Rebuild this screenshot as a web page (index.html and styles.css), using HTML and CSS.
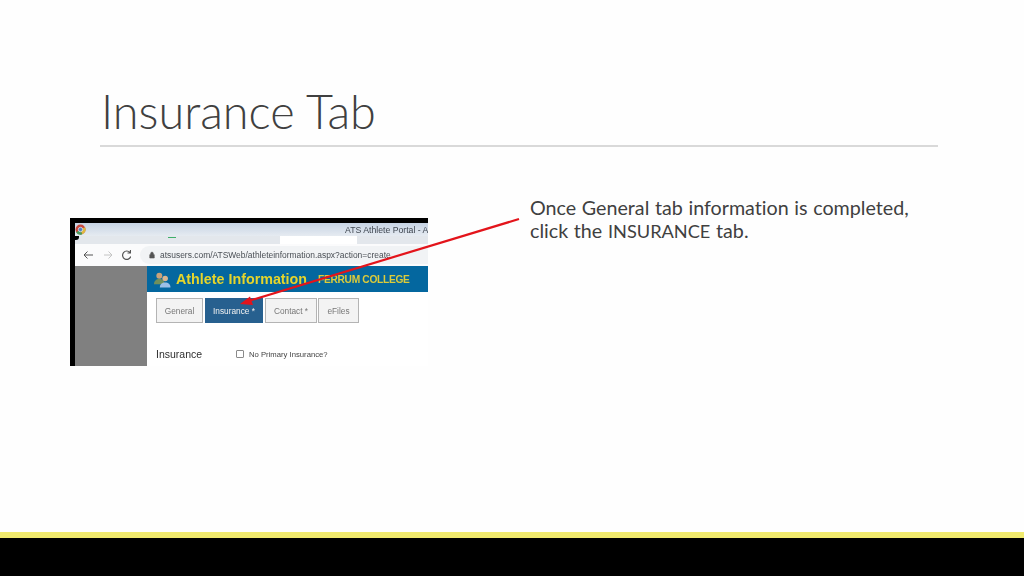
FILE: index.html
```html
<!DOCTYPE html>
<html lang="en">
<head>
<meta charset="utf-8">
<title>Insurance Tab</title>
<link rel="stylesheet" href="styles.css">
</head>
<body>
<div class="slide">
  <header class="head">
    <h1 class="title">Insurance Tab</h1>
  </header>
  <main class="content">
    <figure class="shot">
      <div class="chrome-title">
        <svg class="chrome-logo" viewBox="0 0 12 12" aria-hidden="true">
          <circle cx="6" cy="6" r="5.500" fill="#c9483c"/>
          <path d="M6 6 L1.200 9 A5.500 5.500 0 0 0 8 11.200 Z" fill="#4a9a5a"/>
          <path d="M6 6 L8 11.200 A5.500 5.500 0 0 0 11 3.500 Z" fill="#dfb93f"/>
          <circle cx="6" cy="6" r="2.400" fill="#4f7fc4" stroke="#eee" stroke-width=".8"/>
        </svg>
        <span class="portal">ATS Athlete Portal - A</span>
      </div>
      <div class="chrome-tabs"><span class="tab-mark"></span></div>
      <div class="chrome-bar">
        <svg class="nav" viewBox="0 0 48 12" aria-hidden="true">
          <path d="M10 6H1M4.500 2.500 1 6l3.500 3.500" fill="none" stroke="#555" stroke-width="1"/>
          <path d="M21 6h8M25.500 2.500 29 6l-3.500 3.500" fill="none" stroke="#c4c4c4" stroke-width="1"/>
          <path d="M47 3.500A4.200 4.200 0 1 0 47.800 7.500M47.500 1v3h-3" fill="none" stroke="#555" stroke-width="1.200"/>
        </svg>
        <div class="url">
          <svg class="lock" viewBox="0 0 8 10" aria-hidden="true"><path d="M1 4.500h6V9H1zM2.200 4.500V3a1.800 1.800 0 0 1 3.600 0v1.500" fill="#555" stroke="#555" stroke-width=".8"/></svg>
          <span class="url-text">atsusers.com/ATSWeb/athleteinformation.aspx?action=create</span>
        </div>
      </div>
      <div class="page">
        <div class="side"></div>
        <div class="app">
          <div class="banner">
            <svg class="people" viewBox="0 0 16 16" aria-hidden="true">
              <circle cx="5" cy="4.500" r="2.800" fill="#c9a27a"/>
              <path d="M0 12.500c0-3.200 2-5 5-5s5 1.800 5 5z" fill="#6f8f5c"/>
              <circle cx="10.500" cy="7" r="2.600" fill="#d9b48e"/>
              <path d="M5.500 15.500c0-3 2-4.700 5-4.700s5 1.700 5 4.700z" fill="#9cbfe6"/>
            </svg>
            <span class="app-name">Athlete Information</span>
            <span class="college">FERRUM COLLEGE</span>
          </div>
          <div class="tabs">
            <span class="tab tab-general">General</span>
            <span class="tab tab-active">Insurance *</span>
            <span class="tab tab-contact">Contact *</span>
            <span class="tab tab-efiles">eFiles</span>
          </div>
          <div class="ins-row">
            <span class="ins-label">Insurance</span>
            <span class="check"></span>
            <span class="ins-text">No Primary Insurance?</span>
          </div>
        </div>
      </div>
      <span class="notch"></span>
    </figure>
    <p class="note">Once General tab information is completed, click the <span class="caps">INSURANCE</span> tab.</p>
    <svg class="arrow" viewBox="0 0 1024 576" aria-hidden="true">
      <path d="M519 219 250 300.500" fill="none" stroke="#e3141b" stroke-width="2.200"/>
      <path d="M240 304 250 296.500 253 305z" fill="#e3141b"/>
    </svg>
  </main>
  <footer class="foot"></footer>
</div>
</body>
</html>
```
FILE: styles.css
```css
* { box-sizing: border-box; }
html, body { margin: 0; padding: 0; }
body { width: 1024px; height: 576px; overflow: hidden; background: #fff; font-family: "Liberation Sans", Arial, sans-serif; }

.slide { position: relative; width: 1024px; height: 576px; display: flex; flex-direction: column; background: #fefefe; }

.head { height: 147px; margin: 0 86px 0 100px; border-bottom: 2px solid #d9d9d9; padding: 83px 0 0 1px; }
.title { margin: 0; font-family: Lato, "Open Sans", sans-serif; font-weight: 300; font-size: 46.800px; line-height: 56px; color: #404040; white-space: nowrap; font-variant-ligatures: none; }

.content { flex: 1; display: flex; align-items: flex-start; padding: 49px 0 0 70px; }

.shot { position: relative; margin: 22px 0 0; width: 358px; height: 148px; flex: none; display: flex; flex-direction: column; background: #000; padding: 5px 0 0 5px; overflow: hidden; filter: blur(.3px); }

.chrome-title { height: 13px; flex: none; display: flex; align-items: center; background: linear-gradient(#c6d3e4, #e6ebf1); }
.chrome-logo { width: 11px; height: 11px; flex: none; }
.portal { margin-left: 259px; font-size: 8.700px; color: #3f4650; white-space: nowrap; }

.chrome-tabs { height: 8px; flex: none; background: linear-gradient(90deg, #e3e7ec 0 58%, #fff 58% 80%, #e3e7ec 80%); display: flex; }
.tab-mark { width: 8px; height: 1px; margin: 1px 0 0 93px; background: #3fae6a; }

.chrome-bar { height: 22px; flex: none; background: #fbfbfc; display: flex; align-items: center; padding-left: 8px; }
.nav { width: 48px; height: 12px; flex: none; }
.url { flex: 1; height: 18px; margin-left: 9px; background: #f1f3f5; border-radius: 9px 0 0 9px; display: flex; align-items: center; gap: 5px; padding-left: 9px; font-size: 8.450px; color: #4a4f55; white-space: nowrap; overflow: hidden; }
.lock { width: 6px; height: 8px; flex: none; }

.page { flex: 1; display: flex; min-height: 0; }
.side { width: 72px; flex: none; background: #808080; }
.app { flex: 1; background: #fff; display: flex; flex-direction: column; }

.banner { height: 26px; flex: none; background: #04679f; display: flex; align-items: center; padding-left: 7px; white-space: nowrap; }
.people { width: 17px; height: 17px; flex: none; }
.app-name { margin-left: 5px; font-size: 14.300px; font-weight: 700; color: #e6d52b; }
.college { margin-left: 11px; font-size: 10.200px; letter-spacing: -.3px; font-weight: 700; color: #dccb3a; }

.tabs { display: flex; gap: 2px; margin: 6px 0 0 9px; height: 25px; flex: none; }
.tab { height: 25px; display: flex; align-items: center; justify-content: center; font-size: 8.300px; color: #777; background: #f3f3f3; border: 1px solid #b4b4b4; }
.tab-general { width: 47px; }
.tab-active { width: 58px; background: #27608f; border-color: #27608f; color: #f2f2f2; }
.tab-contact { width: 52px; }
.tab-efiles { width: 41px; margin-left: -1px; }

.ins-row { display: flex; align-items: center; margin: 25px 0 0 9px; white-space: nowrap; }
.ins-label { width: 80px; font-size: 10.500px; color: #2e2e2e; }
.check { width: 8px; height: 8px; border: 1px solid #8a8a8a; border-radius: 1px; background: #fff; flex: none; }
.ins-text { margin-left: 5px; font-size: 7.700px; color: #444; }

.notch { position: absolute; left: 5px; top: 18px; width: 4px; height: 4px; background: #000; border-radius: 0 0 3px 0; }

.note { margin: 0 0 0 102px; width: 400px; font-family: Lato, "Open Sans", sans-serif; font-size: 19.700px; word-spacing: .6px; line-height: 23px; color: #404040; font-variant-ligatures: none; }
.caps { font-size: 18.200px; }

.arrow { position: absolute; left: 0; top: 0; width: 1024px; height: 576px; pointer-events: none; }

.foot { height: 44px; flex: none; background: #000; border-top: 6px solid #f0ea6e; }
```
